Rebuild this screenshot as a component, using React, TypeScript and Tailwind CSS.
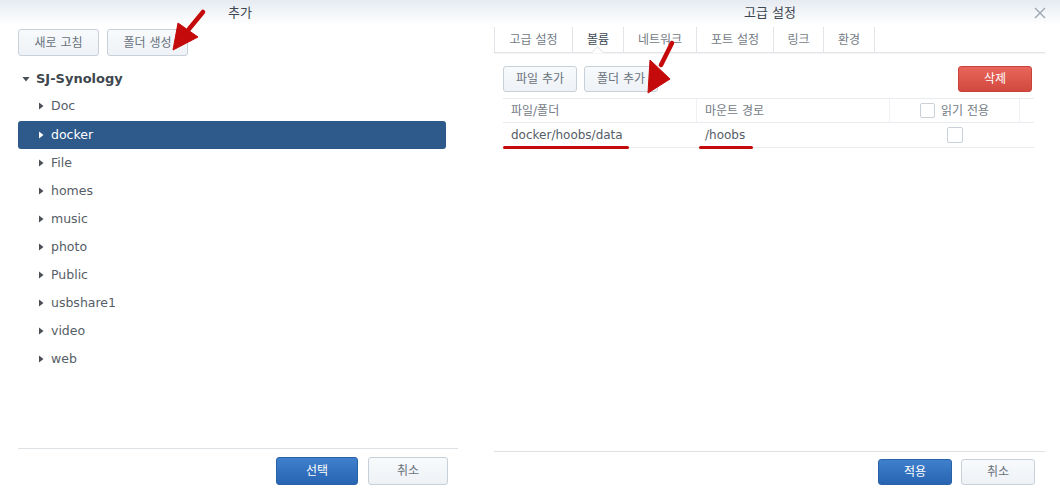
import React from 'react'

const font = { fontFamily: '"DejaVu Sans", "Noto Sans CJK KR", sans-serif' }

const folders = ['Doc', 'docker', 'File', 'homes', 'music', 'photo', 'Public', 'usbshare1', 'video', 'web']
const tabs = [
  { label: '고급 설정', w: 'w-[78px]' },
  { label: '볼륨', w: 'w-[51px]' },
  { label: '네트워크', w: 'w-[73px]' },
  { label: '포트 설정', w: 'w-[77px]' },
  { label: '링크', w: 'w-[50px]' },
  { label: '환경', w: 'w-[51px]' },
]

function Caret({ open, white }: { open?: boolean; white?: boolean }) {
  return (
    <svg width="8" height="8" viewBox="0 0 8 8" className="shrink-0">
      {open ? (
        <path d="M0.5 2 L7.5 2 L4 6.5 Z" fill="#4a4f55" />
      ) : (
        <path d="M2 0.5 L6.5 4 L2 7.5 Z" fill={white ? '#ffffff' : '#4a4f55'} />
      )}
    </svg>
  )
}

function LightButton({ children, className = '' }: { children: React.ReactNode; className?: string }) {
  return (
    <button
      className={`rounded-[3px] border border-[#c8d0d9] bg-gradient-to-b from-[#f8fafc] to-[#eef2f6] text-[12px] text-[#68727c] ${className}`}
    >
      {children}
    </button>
  )
}

function BlueButton({ children, className = '' }: { children: React.ReactNode; className?: string }) {
  return (
    <button
      className={`rounded-[3px] border border-[#2a62a8] bg-gradient-to-b from-[#3f80cc] to-[#2864b2] text-[12px] text-white ${className}`}
    >
      {children}
    </button>
  )
}

function Arrow({ shaft, head }: { shaft: [number, number, number, number]; head: string }) {
  return (
    <g fill="#c40a0a" stroke="#c40a0a">
      <line x1={shaft[0]} y1={shaft[1]} x2={shaft[2]} y2={shaft[3]} strokeWidth="4.5" strokeLinecap="round" />
      <polygon points={head} strokeWidth="1" strokeLinejoin="round" />
    </g>
  )
}

export default function App() {
  return (
    <div className="relative flex h-[489px] w-[1060px] overflow-hidden bg-white text-[#4b535c]" style={font}>
      {/* left dialog: folder picker */}
      <div className="flex w-[480px] flex-col">
        <div className="h-[25px] bg-gradient-to-b from-[#e6ebf1] to-white text-center text-[13px] leading-[25px] text-[#3c4650]">
          추가
        </div>
        <div className="mt-[4px] flex gap-[8px] pl-[18px]">
          <LightButton className="h-[27px] w-[81px]">새로 고침</LightButton>
          <LightButton className="h-[27px] w-[81px]">폴더 생성</LightButton>
        </div>
        <div className="mt-[8px] pl-[18px] pr-[34px]">
          <div className="flex h-[28px] items-center gap-[6px] pl-[4px] pt-[2px] text-[13px] font-bold text-[#3e464e]">
            <Caret open />
            SJ-Synology
          </div>
          {folders.map((f) => {
            const sel = f === 'docker'
            return (
              <div
                key={f}
                className={`flex h-[28px] items-center gap-[6px] pl-[19px] text-[12.5px] ${
                  sel ? 'mt-px h-[27px] rounded-[3px] bg-[#2d5a8b] text-white' : 'text-[#555d66]'
                }`}
              >
                <Caret white={sel} />
                {f}
              </div>
            )
          })}
        </div>
        <div className="flex-1" />
        <div className="mx-[18px] mr-[22px] border-t border-[#dde2e7]" />
        <div className="mb-[4px] mt-[8px] flex justify-end gap-[10px] pr-[32px]">
          <BlueButton className="h-[28px] w-[82px]">선택</BlueButton>
          <LightButton className="h-[28px] w-[80px]">취소</LightButton>
        </div>
      </div>

      {/* right dialog: advanced settings */}
      <div className="flex flex-1 flex-col pl-[14px] pr-[15px]">
        <div className="relative -ml-[14px] -mr-[15px] h-[25px] bg-gradient-to-b from-[#e6ebf1] to-white text-center text-[13px] leading-[25px] text-[#3c4650]">
          고급 설정
          <svg className="absolute right-[14px] top-[7px]" width="12" height="12" viewBox="0 0 12 12">
            <path d="M1 1 L11 11 M11 1 L1 11" stroke="#9aa3ad" strokeWidth="1.2" />
          </svg>
        </div>
        <div className="mt-[2px] flex h-[26px] border-b border-l border-[#e1e5ea] shadow-[0_1px_1px_rgba(0,0,0,0.04)]">
          {tabs.map((t) => {
            const active = t.label === '볼륨'
            return (
              <div
                key={t.label}
                className={`relative flex items-center justify-center border-r border-[#e1e5ea] text-[12px] ${t.w} ${
                  active ? 'text-[#3c4650]' : 'text-[#737b84]'
                }`}
              >
                {t.label}
                {active && (
                  <span className="absolute -bottom-px left-1/2 h-[7px] w-[12px] -translate-x-1/2 overflow-hidden">
                    <span className="absolute left-[1px] top-[2px] block h-[9px] w-[9px] rotate-45 border-l border-t border-[#e1e5ea] bg-white" />
                  </span>
                )}
              </div>
            )
          })}
        </div>
        <div className="mt-[13px] flex items-center pl-[9px] pr-[13px]">
          <LightButton className="h-[26px] w-[74px]">파일 추가</LightButton>
          <LightButton className="ml-[7px] h-[26px] w-[74px]">폴더 추가</LightButton>
          <div className="flex-1" />
          <button className="h-[26px] w-[74px] rounded-[3px] border border-[#c9423a] bg-gradient-to-b from-[#e8665b] to-[#d2483f] text-[12px] text-white">
            삭제
          </button>
        </div>
        <div className="ml-[9px] mr-[11px] mt-[6px] text-[12px]">
          <div className="flex h-[25px] border-y border-[#e8ebef] text-[#737b84]">
            <div className="flex w-[194px] items-center border-r border-[#eef0f3] pl-[8px]">파일/폴더</div>
            <div className="flex w-[193px] items-center border-r border-[#eef0f3] pl-[8px]">마운트 경로</div>
            <div className="flex w-[130px] items-center justify-center gap-[6px] border-r border-[#eef0f3]">
              <span className="block h-[15px] w-[15px] rounded-[2px] border border-[#c9d0d8] bg-white" />
              읽기 전용
            </div>
            <div className="flex-1" />
          </div>
          <div className="flex h-[25px] border-b border-[#e8ebef] text-[#555d66]">
            <div className="relative flex w-[194px] items-center pl-[8px]">
              docker/hoobs/data
              <span className="absolute -bottom-[2px] left-[0px] h-[3px] w-[126px] rounded-full bg-[#c40a0a]" />
            </div>
            <div className="relative flex w-[193px] items-center pl-[8px]">
              /hoobs
              <span className="absolute -bottom-[2px] left-[2px] h-[3px] w-[54px] rounded-full bg-[#c40a0a]" />
            </div>
            <div className="flex w-[130px] items-center justify-center">
              <span className="block h-[16px] w-[16px] rounded-[2px] border border-[#c9d0d8] bg-white" />
            </div>
            <div className="flex-1" />
          </div>
        </div>
        <div className="flex-1" />
        <div className="border-t border-[#dde2e7]" />
        <div className="mb-[4px] mt-[7px] flex justify-end gap-[9px] pr-[10px]">
          <BlueButton className="h-[26px] w-[74px]">적용</BlueButton>
          <LightButton className="h-[26px] w-[74px]">취소</LightButton>
        </div>
      </div>

      {/* annotation arrows drawn over the screenshot */}
      <svg className="pointer-events-none absolute left-0 top-0" width="1060" height="489">
        <Arrow shaft={[203, 12, 189, 29]} head="178,23 198,37 173,50" />
        <Arrow shaft={[672, 43, 661, 65]} head="650,60 670,79 648,93" />
      </svg>
    </div>
  )
}
